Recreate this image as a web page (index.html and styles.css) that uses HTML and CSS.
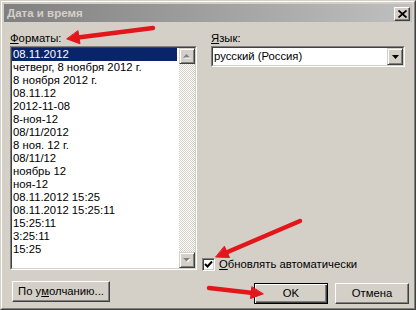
FILE: index.html
```html
<!DOCTYPE html>
<html lang="ru">
<head>
<meta charset="utf-8">
<title>Дата и время</title>
<link rel="stylesheet" href="styles.css">
</head>
<body>
<div class="window">
  <div class="frame">
    <div class="titlebar">
      <span class="title">Дата и время</span>
      <div class="close">
        <svg width="9" height="8" viewBox="0 0 9 8"><path d="M0.5 0.5 L8.5 7.5 M8.5 0.5 L0.5 7.5" stroke="#000" stroke-width="1.8" fill="none"/></svg>
      </div>
    </div>
    <div class="body">
      <div class="col left">
        <div class="label"><u>Ф</u>орматы:</div>
        <div class="listbox">
          <div class="listbox-inner">
            <ul class="items">
              <li class="sel">08.11.2012</li>
              <li>четверг, 8 ноября 2012 г.</li>
              <li>8 ноября 2012 г.</li>
              <li>08.11.12</li>
              <li>2012-11-08</li>
              <li>8-ноя-12</li>
              <li>08/11/2012</li>
              <li>8 ноя. 12 г.</li>
              <li>08/11/12</li>
              <li>ноябрь 12</li>
              <li>ноя-12</li>
              <li>08.11.2012 15:25</li>
              <li>08.11.2012 15:25:11</li>
              <li>15:25:11</li>
              <li>3:25:11</li>
              <li>15:25</li>
            </ul>
            <div class="vscroll">
              <div class="sbtn">
                <svg width="8" height="5" viewBox="0 0 8 5"><path d="M4.5 1 L8 4.5 L1 4.5 Z" fill="#fff"/><path d="M3.5 0 L7 3.5 L0 3.5 Z" fill="#808080"/></svg>
              </div>
              <div class="track"></div>
              <div class="sbtn">
                <svg width="8" height="5" viewBox="0 0 8 5"><path d="M1 1 L8 1 L4.5 4.5 Z" fill="#fff"/><path d="M0 0 L7 0 L3.5 3.5 Z" fill="#808080"/></svg>
              </div>
            </div>
          </div>
        </div>
        <div class="btn btn-default-values">По у<u>м</u>олчанию...</div>
      </div>
      <div class="col right">
        <div class="label indent"><u>Я</u>зык:</div>
        <div class="combo indent">
          <div class="combo-inner">
            <span class="combo-text">русский (Россия)</span>
            <div class="dd">
              <svg width="7" height="4" viewBox="0 0 7 4"><path d="M0 0 L7 0 L3.5 4 Z" fill="#000"/></svg>
            </div>
          </div>
        </div>
        <div class="spacer"></div>
        <div class="check-row">
          <div class="checkbox">
            <svg width="9" height="9" viewBox="0 0 9 9"><path d="M1 4 L3.5 6.5 L8 1.5" stroke="#000" stroke-width="2" fill="none"/></svg>
          </div>
          <span><u>О</u>бновлять автоматически</span>
        </div>
        <div class="btn-row">
          <div class="btn btn-ok">OK</div>
          <div class="btn">Отмена</div>
        </div>
      </div>
    </div>
  </div>
  <svg class="annot" width="416" height="310" viewBox="0 0 416 310">
    <g fill="#e3161b" stroke="#e3161b" stroke-linecap="round">
      <line x1="153" y1="28" x2="78" y2="37.5" stroke-width="4.5"/>
      <polygon points="67,39 80,43.8 78,31" stroke-width="1"/>
      <line x1="300" y1="221" x2="227" y2="252.3" stroke-width="4.5"/>
      <polygon points="216,257 229.5,257.5 224.5,246.5" stroke-width="1"/>
      <line x1="209" y1="288" x2="251" y2="292.7" stroke-width="4.5"/>
      <polygon points="263,294 250.5,298.5 251.8,287" stroke-width="1"/>
    </g>
  </svg>
</div>
</body>
</html>
```
FILE: styles.css
```css
* { box-sizing: border-box; }
html, body { margin: 0; padding: 0; background: #d4d0c8; }
body {
  font-family: "Liberation Sans", Arial, sans-serif;
  font-size: 11.3px;
  line-height: 13px;
  color: #000;
}
u { text-decoration: underline; text-underline-offset: 1px; }

.window {
  position: relative;
  width: 416px;
  height: 310px;
  background: #d4d0c8;
  border: 1px solid;
  border-color: #d4d0c8 #404040 #404040 #d4d0c8;
}
.frame {
  height: 100%;
  border: 1px solid;
  border-color: #fff #808080 #808080 #fff;
  padding: 2px 2px 0 2px;
  display: flex;
  flex-direction: column;
}

.titlebar {
  height: 18px;
  display: flex;
  align-items: flex-start;
  background: linear-gradient(to right, #808080, #c0c0c0);
}
.title {
  flex: 1;
  padding-left: 3px;
  font-weight: bold;
  font-size: 11.5px;
  line-height: 18px;
  color: #d4d0c8;
}
.close {
  width: 16px;
  height: 14px;
  margin: 3px 2px 0 0;
  background: #d4d0c8;
  border: 1px solid;
  border-color: #fff #404040 #404040 #fff;
  box-shadow: inset -1px -1px #808080;
  display: flex;
  align-items: center;
  justify-content: center;
}
.close svg { display: block; margin-top: -1px; }

.body {
  flex: 1;
  display: flex;
  gap: 5px;
  padding: 10px 0 4px 6px;
}
.col { display: flex; flex-direction: column; }
.left { width: 187px; }
.right { flex: 1; }
.label { height: 13px; margin-bottom: 1px; }
.indent { margin-left: 9px; }

.listbox {
  height: 224px;
  border: 1px solid;
  border-color: #808080 #fff #fff #808080;
}
.listbox-inner {
  height: 100%;
  border: 1px solid;
  border-color: #404040 #d4d0c8 #d4d0c8 #404040;
  background: #fff;
  display: flex;
}
.items {
  flex: 1;
  list-style: none;
  margin: 0 2px 0 0;
  padding: 0;
}
.items li { height: 13px; padding-left: 1px; white-space: nowrap; }
.items li.sel { background: #0a246a; color: #fff; }

.vscroll { width: 16px; display: flex; flex-direction: column; }
.track {
  flex: 1;
  background: repeating-conic-gradient(#d4d0c8 0 25%, #fff 0 50%) 0 0 / 2px 2px;
}
.sbtn, .dd {
  width: 16px;
  height: 16px;
  background: #d4d0c8;
  border: 1px solid;
  border-color: #d4d0c8 #404040 #404040 #d4d0c8;
  box-shadow: inset 1px 1px #fff, inset -1px -1px #808080;
  display: flex;
  align-items: center;
  justify-content: center;
}
.sbtn svg, .dd svg { display: block; }

.btn {
  height: 21px;
  margin-top: 11px;
  background: #d4d0c8;
  border: 1px solid;
  border-color: #fff #404040 #404040 #fff;
  box-shadow: inset -1px -1px #808080;
  display: flex;
  align-items: center;
  justify-content: center;
}
.btn-default-values { width: 98px; margin-left: 2px; padding-bottom: 1px; }

.combo {
  height: 21px;
  width: 194px;
  border: 1px solid;
  border-color: #808080 #fff #fff #808080;
}
.combo-inner {
  height: 100%;
  border: 1px solid;
  border-color: #404040 #d4d0c8 #d4d0c8 #404040;
  background: #fff;
  display: flex;
  align-items: center;
}
.combo-text { flex: 1; padding-left: 1px; }
.dd { height: 17px; }

.spacer { flex: 1; }

.check-row {
  display: flex;
  align-items: center;
  gap: 4px;
  height: 13px;
}
.checkbox {
  width: 13px;
  height: 13px;
  background: #fff;
  border: 1px solid;
  border-color: #808080 #fff #fff #808080;
  box-shadow: inset 1px 1px #404040, inset -1px -1px #d4d0c8;
  display: flex;
  align-items: center;
  justify-content: center;
}
.checkbox svg { display: block; }

.btn-row {
  display: flex;
  justify-content: flex-end;
  gap: 7px;
  margin-right: 3px;
}
.btn-row .btn { width: 74px; margin-top: 12px; }
.btn-row .btn.btn-ok {
  border: 1px solid #000;
  box-shadow: inset 1px 1px #fff, inset -1px -1px #404040, inset -2px -2px #808080;
}

.annot {
  position: absolute;
  left: -1px;
  top: -1px;
  pointer-events: none;
}
```
